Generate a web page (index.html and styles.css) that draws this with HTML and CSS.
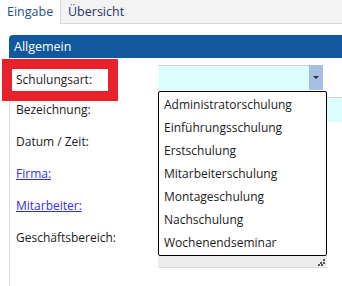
FILE: index.html
```html
<!DOCTYPE html>
<html lang="de">
<head>
  <meta charset="UTF-8" />
  <title>Schulung</title>
  <link rel="stylesheet" href="styles.css">
</head>
<body>
  <div class="tabs">
    <div class="tab active">Eingabe</div>
    <div class="tab">Übersicht</div>
    <div class="tab-rest"></div>
  </div>

  <div class="panel">
    <div class="panel-head">Allgemein</div>
    <div class="panel-body">
      <div class="row">
        <div class="label"><span class="marked">Schulungsart:</span></div>
        <div class="field">
          <div class="combo">
            <div class="combo-value"></div>
            <div class="combo-btn"><span class="caret"></span></div>
          </div>
          <div class="dropdown">
            <ul class="options">
              <li>Administratorschulung</li>
              <li>Einführungsschulung</li>
              <li>Erstschulung</li>
              <li>Mitarbeiterschulung</li>
              <li>Montageschulung</li>
              <li>Nachschulung</li>
              <li>Wochenendseminar</li>
            </ul>
            <div class="grip">
              <svg width="7" height="7" viewBox="0 0 7 7">
                <rect x="5" y="0" width="2" height="2" fill="#555"/>
                <rect x="2" y="3" width="2" height="2" fill="#555"/>
                <rect x="5" y="3" width="2" height="2" fill="#555"/>
                <rect x="0" y="5" width="2" height="2" fill="#555"/>
                <rect x="3" y="5" width="2" height="2" fill="#555"/>
              </svg>
            </div>
          </div>
        </div>
      </div>
      <div class="row">
        <div class="label">Bezeichnung:</div>
        <div class="field"><div class="input"></div></div>
      </div>
      <div class="row">
        <div class="label">Datum / Zeit:</div>
        <div class="field"></div>
      </div>
      <div class="row">
        <div class="label"><a href="#">Firma:</a></div>
        <div class="field"></div>
      </div>
      <div class="row">
        <div class="label"><a href="#">Mitarbeiter:</a></div>
        <div class="field"></div>
      </div>
      <div class="row">
        <div class="label">Geschäftsbereich:</div>
        <div class="field"></div>
      </div>
    </div>
  </div>
</body>
</html>
```

FILE: styles.css
```css
body {
  margin: 0;
  background: #fff;
  font-family: 'Open Sans', 'Noto Sans', sans-serif;
  font-size: 12px;
  color: #1a1a1a;
  overflow: hidden;
}
.tabs {
  display: flex;
  height: 24px;
}
.tab {
  padding: 0 7px;
  line-height: 24px;
  font-size: 12.5px;
  color: #2d2d6b;
  background: #f3f3f3;
  border-bottom: 1px solid #d9d9d9;
  border-left: 1px solid #d9d9d9;
}
.tab.active {
  width: 46px;
  background: #fff;
  color: #1d4f8c;
  border: none;
  padding-right: 7px;
}
.tab-rest {
  flex: 1;
  background: #f3f3f3;
  border-bottom: 1px solid #d9d9d9;
}
.panel {
  margin: 11px -10px 0 9px;
}
.panel-head {
  height: 23px;
  line-height: 23px;
  padding-left: 5px;
  background: #12589f;
  color: #fff;
  font-size: 12.5px;
  border-top-left-radius: 4px;
}
.panel-body {
  height: 224px;
  padding-top: 7px;
  border-left: 1px solid #dcdcdc;
  border-bottom: 1px solid #dcdcdc;
  border-bottom-left-radius: 4px;
}
.row {
  display: flex;
  height: 32px;
}
.label {
  width: 142px;
  padding-left: 6px;
  line-height: 25px;
}
.marked {
  display: inline-block;
  width: 92px;
  line-height: 22px;
  margin-top: 4px;
  padding-left: 4px;
  margin-left: -4px;
  outline: 10px solid #e8212b;
}
.label a {
  color: #2e2ef0;
}
.field {
  position: relative;
  flex: 1;
}
.combo {
  display: flex;
  width: 165px;
  height: 25px;
}
.combo-value {
  flex: 1;
  background: #dcfffe;
  border-top: 1px solid #cfcfcf;
}
.combo-btn {
  width: 14px;
  background: #a6bfe3;
  display: flex;
  align-items: center;
  justify-content: center;
}
.caret {
  width: 0;
  height: 0;
  border-left: 3px solid transparent;
  border-right: 3px solid transparent;
  border-top: 3px solid #333;
}
.input {
  height: 24px;
  background: #dcfffe;
  border-top: 1px solid #cfcfcf;
}
.dropdown {
  position: absolute;
  top: 26px;
  left: 0;
  width: 169px;
  z-index: 2;
}
.options {
  list-style: none;
  margin: 0;
  padding: 0;
  height: 163px;
  background: #fff;
  border: 1px solid #000;
  border-radius: 2px;
}
.options li {
  padding-left: 5px;
  height: 23px;
  line-height: 23px;
}
.options li:first-child {
  margin-top: 1px;
}
.grip {
  height: 10px;
  background: #ececec;
  border-bottom: 1px solid #dedede;
  display: flex;
  justify-content: flex-end;
  align-items: flex-end;
  padding: 0 2px 1px 0;
}
```
